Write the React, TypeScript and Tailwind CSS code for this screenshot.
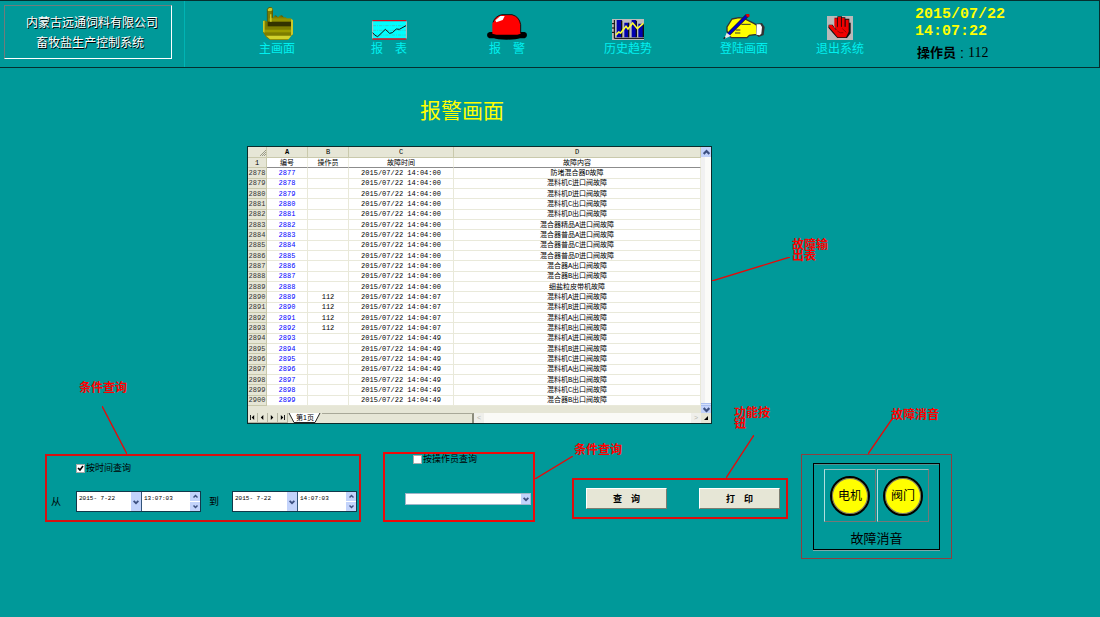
import type { ReactNode } from 'react';

const CJK = "font-['Liberation_Sans','Noto_Sans_CJK_SC',sans-serif]";
const MONO = "font-['Liberation_Mono','Noto_Sans_CJK_SC',monospace]";

const records: [number, string, string, string][] = [
  [2877, '', '14:04:00', '防堵混合器D故障'],
  [2878, '', '14:04:00', '混料机C进口阀故障'],
  [2879, '', '14:04:00', '混料机D进口阀故障'],
  [2880, '', '14:04:00', '混料机C出口阀故障'],
  [2881, '', '14:04:00', '混料机D出口阀故障'],
  [2882, '', '14:04:00', '混合器精品A进口阀故障'],
  [2883, '', '14:04:00', '混合器普品A进口阀故障'],
  [2884, '', '14:04:00', '混合器普品C进口阀故障'],
  [2885, '', '14:04:00', '混合器普品D进口阀故障'],
  [2886, '', '14:04:00', '混合器A出口阀故障'],
  [2887, '', '14:04:00', '混合器B出口阀故障'],
  [2888, '', '14:04:00', '细盐粒皮带机故障'],
  [2889, '112', '14:04:07', '混料机A进口阀故障'],
  [2890, '112', '14:04:07', '混料机B进口阀故障'],
  [2891, '112', '14:04:07', '混料机A出口阀故障'],
  [2892, '112', '14:04:07', '混料机B出口阀故障'],
  [2893, '', '14:04:49', '混料机A进口阀故障'],
  [2894, '', '14:04:49', '混料机B进口阀故障'],
  [2895, '', '14:04:49', '混料机C进口阀故障'],
  [2896, '', '14:04:49', '混料机A出口阀故障'],
  [2897, '', '14:04:49', '混料机B出口阀故障'],
  [2898, '', '14:04:49', '混料机C出口阀故障'],
  [2899, '', '14:04:49', '混合器B出口阀故障'],
];

function PointerIcon() {
  return (
    <svg width="31" height="33" viewBox="0 0 93 99">
      <path d="M16 7l5-6h8l4 6v26l4-6h6l5 4 5-5h7l5 5h6l5 5 12 1 4 4v42l-6 5-9 11H24L12 90l-9-14V42l5-2 8 4z" fill="#7d7d00" />
      <path d="M18 44h71v14H18z" fill="#333300" />
      <path d="M20 34h68v9H20z" fill="#929200" />
      <path d="M8 68h82v8H8z" fill="#9c9c00" />
      <path d="M12 86h76l-8 11H24z" fill="#d2d22c" />
      <path d="M17 6l5-4h7l2 10H17zM24 22h5v22h-5zM3 42l5-1v36l-5-3zM87 36l6 3v43l-6 4z" fill="#c8c828" />
      <path d="M29 10h4v22h-4zM36 27l6-2 5 6zM53 27l7-2 5 6z" fill="#5c5c00" />
      <path d="M16 20v38M16 20V7l5-6h8" fill="none" stroke="#4a4a00" strokeWidth="2" />
    </svg>
  );
}

function ReportIcon() {
  return (
    <svg width="35" height="20" viewBox="0 0 105 60">
      <path d="M1 1h102v57H1z" fill="#00ffff" />
      <path d="M2 17h100M2 31h100M2 45h100" stroke="#4fb0b0" strokeWidth="2" strokeDasharray="10 3 3 3" />
      <path d="M1 2h102M1 57h102" stroke="#e00818" strokeWidth="4" />
      <path d="M103 4v51M2 4v51" stroke="#c0c0c0" strokeWidth="3" />
      <path d="M2 38l7 8 8 4 23-22 13 12 8-2 12-11 9 1 20-11" fill="none" stroke="#111" strokeWidth="3" />
    </svg>
  );
}

function AlarmIcon() {
  return (
    <svg width="40" height="26" viewBox="0 0 120 78">
      <path d="M8 54h14l14 6h48l16-6h13q7 2 7 9t-7 10H99q-10 4-40 4t-38-4H7q-7-3-7-10t8-9z" fill="#000" />
      <path d="M16 59V29Q20 8 42 3h35q20 5 24 27v29l-10 3H28z" fill="#ff0000" />
      <path d="M18 25Q25 6 44 2h31q22 6 26 30v26" fill="none" stroke="#111" strokeWidth="3" />
      <path d="M25 19L40 6h13L47 18 28 25z" fill="#fff" />
    </svg>
  );
}

function TrendIcon() {
  return (
    <svg width="32" height="21" viewBox="0 0 96 63">
      <path d="M0 0h96v63H0z" fill="#bcbcbc" />
      <path d="M14 3h16v52H14zM37 11h13v44H37zM59 3h13v52H59zM79 14h14v41H79z" fill="#0000b0" />
      <path d="M29 5v50M50 11v44M73 5v50M94 14v41" stroke="#111" strokeWidth="4" />
      <path d="M7 3v55h89M0 14h7M0 27h7M0 40h7" fill="none" stroke="#000" strokeWidth="3" />
      <path d="M12 48l8-9 6 3 16-20 6 8 14-18 14 17 18-16" fill="none" stroke="#ffff30" strokeWidth="5" />
    </svg>
  );
}

function SignIcon() {
  return (
    <svg width="42" height="26" viewBox="0 0 126 78">
      <path d="M27 15l21-4 15 2 31 16 8 5v27l-23 3-7 7H25l-8-8-5-12V39z" fill="#ffff00" stroke="#333" strokeWidth="4" />
      <path d="M55 31h28M38 48h14M36 57h16" stroke="#333" strokeWidth="3" />
      <path d="M100 29l17-2 8 12-3 24-15 6-7-6z" fill="#333" />
      <path d="M101 31h11l5 8-2 20-5 5-10-2z" fill="#fff" />
      <path d="M72 5L16 61" stroke="#222" strokeWidth="11" />
      <path d="M72 5L16 61" stroke="#0000d0" strokeWidth="7" />
      <path d="M70 1h8v7h-6z" fill="#f00" stroke="#d00000" strokeWidth="3" />
      <path d="M11 56l13 10L4 74z" fill="#e8e8e8" />
      <path d="M3 69l5 1-3 5H1z" fill="#222" />
    </svg>
  );
}

function ExitIcon() {
  return (
    <svg width="26" height="24" viewBox="0 0 78 72">
      <path d="M0 0h78v72H0z" fill="#b9b9b9" />
      <path d="M22 5h9V1h14v3h10v4h12v12h4v32L60 66H31L20 54 4 35l1-9h12l8 12V10z" fill="#111" />
      <path d="M22 7h8v25h3V3h9v29h3V6h8v26h3V11h9v36L57 64H32L21 50 6 33v-6h9l11 14h3L22 31z" fill="#f00000" />
      <path d="M31 8v26M43 6v26M54 10v22M31 45q8 8 18 5M46 38l12 11" fill="none" stroke="#700000" strokeWidth="2" />
    </svg>
  );
}

const navItems: { label: string; icon: ReactNode }[] = [
  { label: '主画面', icon: <PointerIcon /> },
  { label: '报\u3000表', icon: <ReportIcon /> },
  { label: '报\u3000警', icon: <AlarmIcon /> },
  { label: '历史趋势', icon: <TrendIcon /> },
  { label: '登陆画面', icon: <SignIcon /> },
  { label: '退出系统', icon: <ExitIcon /> },
];

function Header() {
  return (
    <header className="flex h-[68px] border-y border-r border-y-[#052f2f] border-r-[#052f2f]">
      <div className="w-[185px] shrink-0 border-r border-[#00b4b4] pt-1 pl-1">
        <div className="h-[54px] w-[168px] border border-t-[#6f7c7c] border-r-white border-b-white border-l-[#6f7c7c] pt-[7px] pl-2 text-center text-xs leading-5 whitespace-nowrap text-white [text-shadow:1px_1px_0_#000]">
          <p>内蒙古远通饲料有限公司</p>
          <p className="pr-1">畜牧盐生产控制系统</p>
        </div>
      </div>
      <nav className="ml-9 grid flex-1 grid-cols-[112fr_112fr_124fr_118fr_114fr_78fr]">
        {navItems.map((item) => (
          <button key={item.label} type="button" className="flex flex-col items-center gap-px pt-1.5 text-xs leading-4 whitespace-nowrap text-[#00f0f0]">
            <span className="flex h-[33px] items-end">{item.icon}</span>
            <span>{item.label}</span>
          </button>
        ))}
      </nav>
      <div className="ml-9 w-[184px] shrink-0 pt-[5px]">
        <div className={`text-[15px] leading-[17px] font-bold text-[#ffff00] ${MONO}`}>
          <p>2015/07/22</p>
          <p>14:07:22</p>
        </div>
        <p className="mt-1 flex items-center pl-0.5 text-sm leading-[18px] text-black">
          <span className="text-[13px] font-bold">操作员</span>
          <span className="px-1">:</span>
          <span className="font-['Liberation_Serif',serif]">112</span>
        </p>
      </div>
    </header>
  );
}

function Chevron({ up = false, size = 5 }: { up?: boolean; size?: number }) {
  return (
    <svg width={size} height={size} viewBox="0 0 10 10" fill="none" stroke="#3d5080" strokeWidth="3">
      <path d={up ? 'M1 7l4-4 4 4' : 'M1 3l4 4 4-4'} />
    </svg>
  );
}

function Callout({ label, labelClass, lineClass, w, h, falling = false }: { label: string; labelClass: string; lineClass: string; w: number; h: number; falling?: boolean }) {
  return (
    <>
      <span className={`absolute text-xs leading-[11px] font-bold text-[#ff0000] ${labelClass}`}>{label}</span>
      <svg className={`absolute ${lineClass}`} width={w} height={h} stroke="#e80808" strokeWidth="1.3">
        {falling ? <line x1="0" y1="0" x2={w} y2={h} /> : <line x1="0" y1={h} x2={w} y2="0" />}
      </svg>
    </>
  );
}

const headCell = 'border-r border-b border-[#c9c9ac] p-0 font-normal';
const titleCell = 'border-r border-b border-r-[#efefe2] border-b-[#8c8c8c] p-0';
const bodyCell = 'border-r border-b border-[#e9e9da] p-0';

function AlarmSheet() {
  return (
    <div className="border border-[#0b2b2b] bg-[#e6e6d6]">
      <div className="flex">
        <table className={`h-[259px] flex-1 table-fixed border-separate border-spacing-0 bg-white text-center text-[7px] leading-[8px] whitespace-nowrap text-black ${MONO}`}>
          <colgroup>
            <col className="w-[19px]" />
            <col className="w-[41px]" />
            <col className="w-[41px]" />
            <col className="w-[105px]" />
            <col />
          </colgroup>
          <thead>
            <tr className="h-[11px] bg-[#e6e6d6]">
              <td className={headCell}>
                <svg className="ml-auto" width="7" height="7" viewBox="0 0 7 7" stroke="#9a9a88">
                  <path d="M1 7l6-6M3 7l4-4M5 7l2-2" />
                </svg>
              </td>
              <th className={`${headCell} !font-bold`}>A</th>
              <th className={headCell}>B</th>
              <th className={headCell}>C</th>
              <th className={headCell}>D</th>
            </tr>
          </thead>
          <tbody>
            <tr>
              <th className={`${headCell} bg-[#e6e6d6]`}>1</th>
              <td className={titleCell}>编号</td>
              <td className={titleCell}>操作员</td>
              <td className={titleCell}>故障时间</td>
              <td className={titleCell}>故障内容</td>
            </tr>
            {records.map(([id, operator, time, text]) => (
              <tr key={id}>
                <th className={`${headCell} bg-[#e6e6d6] text-[#333]`}>{id + 1}</th>
                <td className={`${bodyCell} text-[#0000ff]`}>{id}</td>
                <td className={bodyCell}>{operator}</td>
                <td className={bodyCell}>2015/07/22 {time}</td>
                <td className={bodyCell}>{text}</td>
              </tr>
            ))}
          </tbody>
        </table>
        <div className="flex w-[10px] shrink-0 flex-col bg-[#fbfbf8]">
          <button type="button" aria-label="向上" className="flex h-[10px] items-center justify-center bg-[#c3d3fb]"><Chevron up size={7} /></button>
          <div className="flex-1 border-l-4 border-[#f1f1f1]" />
          <div className="h-[3px] border-y border-[#a9bff0] bg-[#d5e0fc]" />
        </div>
      </div>
      <div className="flex h-[7px] justify-end">
        <button type="button" aria-label="向下" className="flex w-[10px] items-center justify-center bg-[#c3d3fb]"><Chevron size={7} /></button>
      </div>
      <div className="flex h-[10px] text-[7px] leading-[10px] text-black">
        {['首页', '上一页', '下一页', '末页'].map((name, i) => (
          <button key={name} type="button" aria-label={name} className="flex w-[10px] items-center justify-center border-r border-b border-[#b5b5a2]">
            <svg width="5" height="5" viewBox="0 0 6 6">
              <path d={['M0 0h1v6H0zM5 0v6L2 3z', 'M4 0v6L1 3z', 'M1 0v6l3-3z', 'M5 0h1v6H5zM1 0v6l3-3z'][i]} />
            </svg>
          </button>
        ))}
        <button type="button" className="relative w-[34px] text-center">
          <svg className="absolute inset-0" width="34" height="10" viewBox="0 0 34 10" stroke="#222">
            <path d="M1 0l5 9.5h21L32 0" fill="#fff" />
          </svg>
          <span className="relative">第1页</span>
        </button>
        <div className="w-[152px] border-t border-r-2 border-t-[#a8a898] border-r-[#8c8c7c]" />
        <div className="flex flex-1 items-center justify-between bg-[#fafaf6]">
          <span className="flex h-full w-[10px] items-center justify-center bg-[#efefea] text-[#b8b8b0]">&lt;</span>
          <span className="flex h-full w-[10px] items-center justify-center bg-[#efefea] text-[#b8b8b0]">&gt;</span>
        </div>
        <div className="flex w-[10px] items-center justify-center">
          <svg width="4" height="4"><path d="M4 0v4H0z" /></svg>
        </div>
      </div>
    </div>
  );
}

function DateTimeField({ name, date, time }: { name: string; date: string; time: string }) {
  const box = `w-0 min-w-0 flex-1 bg-transparent pl-0.5 pt-0.5 pb-2 text-[6px] leading-[8px] text-black outline-none ${MONO}`;
  return (
    <div className="flex h-[21px] w-[125px] shrink-0 border border-[#12384a] bg-white">
      <div className="flex w-[65px] shrink-0 border-r border-[#33557a]">
        <input aria-label={`${name}日期`} defaultValue={date} className={box} />
        <button type="button" aria-label="选择日期" className="flex w-[10px] items-center justify-center bg-[#c3d3fb]"><Chevron size={6} /></button>
      </div>
      <div className="flex min-w-0 flex-1">
        <input aria-label={`${name}时间`} defaultValue={time} className={box} />
        <div className="flex w-[10px] shrink-0 flex-col bg-[#c3d3fb]">
          <button type="button" aria-label="增加" className="flex flex-1 items-center justify-center border-b border-white"><Chevron up /></button>
          <button type="button" aria-label="减少" className="flex flex-1 items-center justify-center"><Chevron /></button>
        </div>
      </div>
    </div>
  );
}

function CheckOption({ label, checked = false }: { label: string; checked?: boolean }) {
  return (
    <label className="flex items-center gap-px text-[9px] leading-[10px] whitespace-nowrap text-black">
      <input type="checkbox" defaultChecked={checked} className="peer size-[9px] appearance-none border border-[#aaa] bg-white" />
      <svg className="pointer-events-none -ml-[10px] hidden size-[9px] peer-checked:block" viewBox="0 0 9 9" fill="none" stroke="#000" strokeWidth="1.6">
        <path d="M2 4l2 2 3-4" />
      </svg>
      <span>{label}</span>
    </label>
  );
}

const pushButton = 'h-[21px] w-[81px] border border-t-white border-r-[#7c7c70] border-b-[#7c7c70] border-l-white bg-[#e6e6d6] text-[9px] leading-[10px] font-bold text-black';

export default function App() {
  return (
    <div className={`min-h-screen bg-[#009999] ${CJK}`}>
      <Header />
      <main>
        <div className="grid grid-cols-[247fr_465fr_388fr]">
          <section className="col-start-2">
            <h1 className="pt-7 pr-[35px] pb-5 text-center text-[21px] leading-[30px] text-[#ffff00]">报警画面</h1>
            <div className="relative">
              <AlarmSheet />
              <Callout label="故障输出表" labelClass="left-full top-[94px] ml-20 w-9" lineClass="left-full top-[111px]" w={78} h={24} />
            </div>
          </section>
        </div>
        <div className="mt-7 grid grid-cols-[45fr_316fr_22fr_152fr_37fr_216fr_13fr_151fr_148fr] items-start pb-10">
          <section className="relative col-start-2 mt-0.5 h-[68px] border-2 border-[#d81010] pt-[7px]">
            <div className="flex pl-[29px]">
              <CheckOption label="按时间查询" checked />
            </div>
            <div className="flex items-center pt-[18px] pl-1 text-[10px] leading-5 text-black">
              <span className="w-[25px] shrink-0">从</span>
              <DateTimeField name="开始" date="2015- 7-22" time="13:07:03" />
              <span className="w-[31px] shrink-0 pl-2">到</span>
              <DateTimeField name="结束" date="2015- 7-22" time="14:07:03" />
            </div>
            <Callout label="条件查询" labelClass="left-8 -top-[73px] w-12" lineClass="left-[55px] -top-[50px]" w={25} h={48} falling />
          </section>

          <section className="relative col-start-4 h-[70px] border-2 border-[#f00808]">
            <div className="flex pl-7">
              <CheckOption label="按操作员查询" />
            </div>
            <div className="relative mt-[29px] mr-0.5 ml-5 flex">
              <select aria-label="操作员" className="h-3 w-full appearance-none border border-[#9fb4c8] bg-white text-[8px]">
                <option></option>
                <option>112</option>
              </select>
              <span className="pointer-events-none absolute inset-y-px right-px flex w-[9px] items-center justify-center bg-[#c3d3fb]"><Chevron size={6} /></span>
            </div>
            <Callout label="条件查询" labelClass="left-full -top-[9px] ml-[41px] w-12" lineClass="left-full top-0.5 ml-0.5" w={38} h={23} />
          </section>

          <section className="relative col-start-6 mt-[26px] flex h-[41px] items-center justify-between border-2 border-[#e00c0c] pr-1.5 pl-3">
            <button type="button" className={pushButton}>查{'\u3000'}询</button>
            <button type="button" className={pushButton}>打{'\u3000'}印</button>
            <Callout label="功能按钮" labelClass="left-40 -top-[72px] w-9" lineClass="left-[152px] -top-[45px]" w={28} h={43} />
          </section>

          <section className="relative col-start-8 mt-0.5 border border-[#8c4040] px-[11px] pt-2 pb-2">
            <div className="h-[87px] border border-black pt-[5px] shadow-[0_1px_0_#7fa8a8,inset_0_1px_0_#4d8f8f]">
              <div className="flex justify-center gap-px">
                {['电机', '阀门'].map((name) => (
                  <div key={name} className="flex h-[53px] w-[52px] items-center justify-center border border-t-[#90bcbc] border-r-[#777] border-b-[#777] border-l-[#b0dede]">
                    <button type="button" className="size-10 rounded-full border-2 border-black bg-[#ffff00] text-xs leading-4 text-black shadow-[inset_0_0_0_1px_#777]">{name}</button>
                  </div>
                ))}
              </div>
              <p className="pt-2 text-center text-[13px] leading-[18px] text-black">故障消音</p>
            </div>
            <Callout label="故障消音" labelClass="left-[89px] -top-[45px] w-12" lineClass="left-[66px] -top-9" w={24} h={35} />
          </section>
        </div>
      </main>
    </div>
  );
}
